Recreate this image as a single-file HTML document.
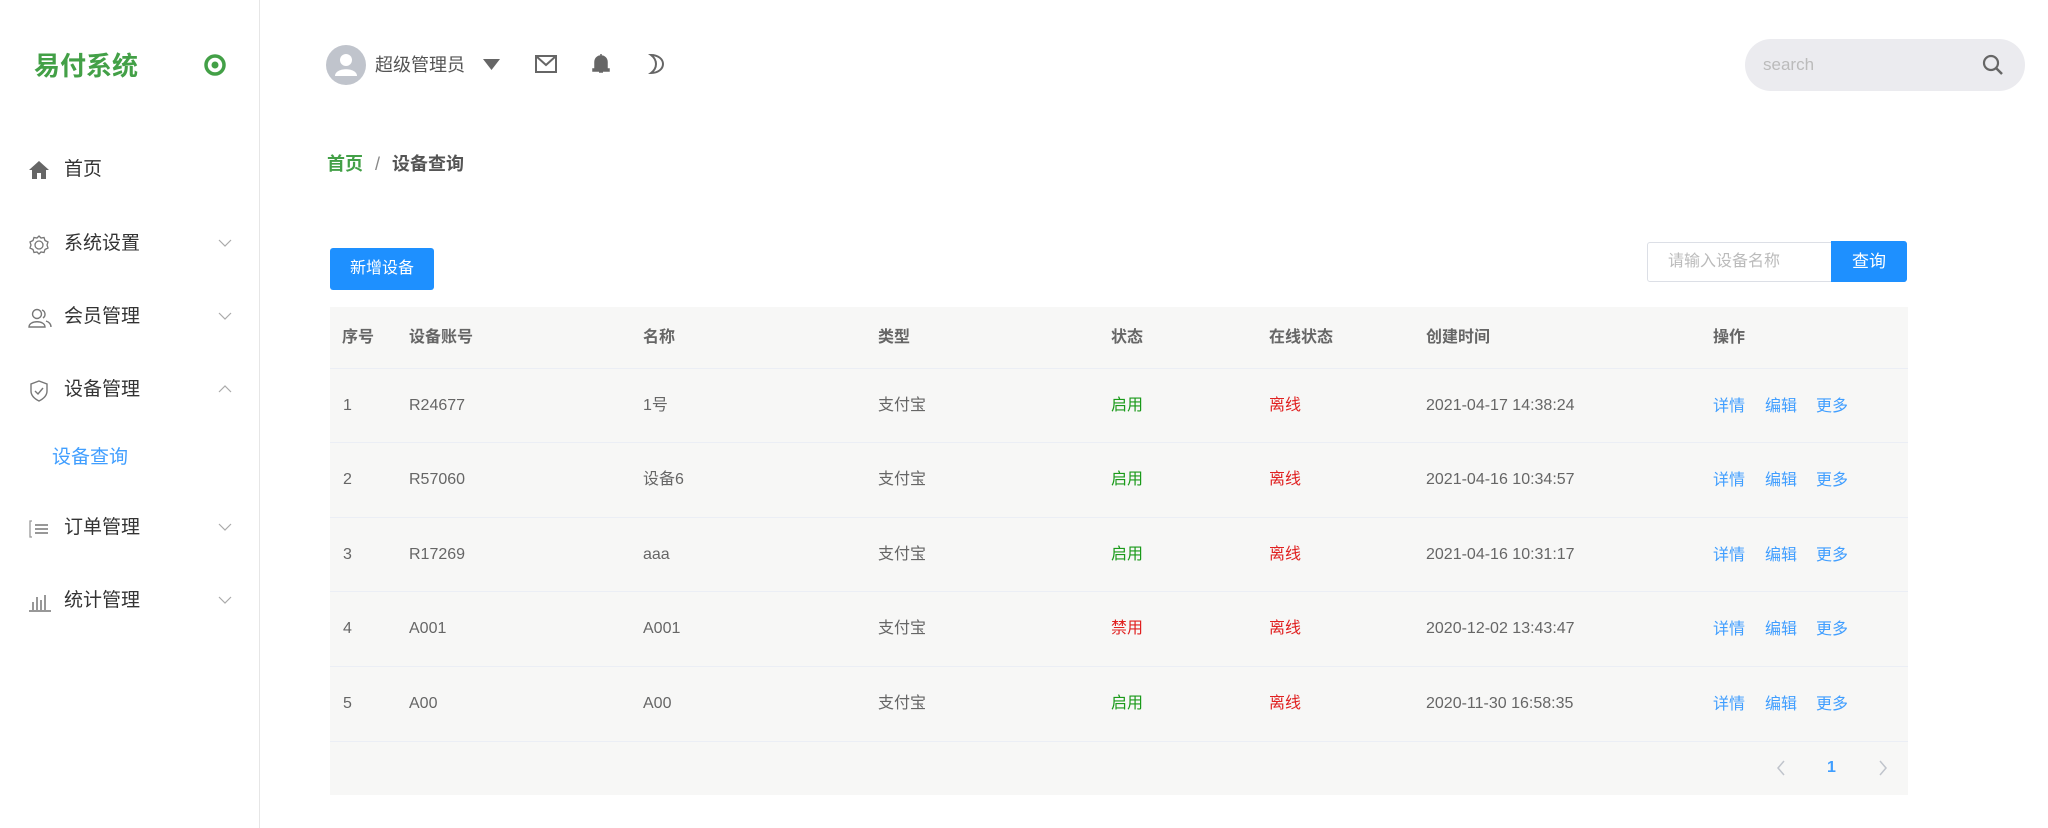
<!DOCTYPE html>
<html><head><meta charset="utf-8"><style>
*{margin:0;padding:0;box-sizing:border-box}
body{width:2048px;height:828px;overflow:hidden;background:#fff;font-family:"Liberation Sans","Noto Sans CJK SC",sans-serif;color:#333;position:relative}
.abs{position:absolute}
.side{left:0;top:0;width:260px;height:828px;border-right:1px solid #e6e6e6}
.logo{left:34px;top:51px;font-size:26px;font-weight:bold;color:#43a047;line-height:30px}
.mi{left:0;width:259px;height:40px;line-height:40px;font-size:19px;color:#333}
.mi .t{position:absolute;left:64px}
.mi svg.ic{position:absolute;left:28px;top:10px}
.mi .ch{position:absolute;left:218px;top:14px}
.th,.td{position:absolute;font-size:16px;line-height:20px}
.th{color:#666;font-weight:bold}
.td{color:#666}
.line{position:absolute;left:330px;width:1578px;height:1px;background:#ebeef5}
</style></head><body>
<div class="abs side"></div>
<div class="abs logo">易付系统</div>
<svg class="abs" style="left:203px;top:53px" width="24" height="24"><circle cx="12" cy="12" r="9" fill="none" stroke="#43a047" stroke-width="3.5"/><circle cx="12" cy="12" r="3.5" fill="#43a047"/></svg>

<div class="abs mi" style="top:150px"><svg class="ic" width="22" height="20" viewBox="0 0 22 20"><path d="M11 1 L1 10 H4 V19 H9 V13 H13 V19 H18 V10 H21 Z" fill="#666"/></svg><span class="t">首页</span></div>
<div class="abs mi" style="top:224px"><svg class="ic" width="22" height="22" viewBox="0 0 22 22"><path d="M11 2 L13 4 L16 3.5 L17 6.5 L20 8 L19 11 L20 14 L17 15.5 L16 18.5 L13 18 L11 20 L9 18 L6 18.5 L5 15.5 L2 14 L3 11 L2 8 L5 6.5 L6 3.5 L9 4 Z" fill="none" stroke="#777" stroke-width="1.3"/><circle cx="11" cy="11" r="4" fill="none" stroke="#777" stroke-width="1.3"/></svg><span class="t">系统设置</span><svg class="ch" width="14" height="10"><path d="M1 2 L7 8 L13 2" fill="none" stroke="#aaa" stroke-width="1.2"/></svg></div>
<div class="abs mi" style="top:297px"><svg class="ic" width="24" height="22" viewBox="0 0 24 22"><circle cx="9" cy="7" r="4.5" fill="none" stroke="#777" stroke-width="1.4"/><path d="M1 20 C1 13 17 13 17 20 Z" fill="none" stroke="#777" stroke-width="1.4"/><path d="M14 3 A4.5 4.5 0 0 1 15 11 M18 14 C21 15 23 17 23 20" fill="none" stroke="#777" stroke-width="1.4"/></svg><span class="t">会员管理</span><svg class="ch" width="14" height="10"><path d="M1 2 L7 8 L13 2" fill="none" stroke="#aaa" stroke-width="1.2"/></svg></div>
<div class="abs mi" style="top:370px"><svg class="ic" width="22" height="22" viewBox="0 0 22 22"><path d="M11 1 L19 4 V11 C19 16 15 19 11 21 C7 19 3 16 3 11 V4 Z" fill="none" stroke="#777" stroke-width="1.4"/><path d="M7 11 L10 14 L15 8" fill="none" stroke="#777" stroke-width="1.4"/></svg><span class="t">设备管理</span><svg class="ch" width="14" height="10"><path d="M1 8 L7 2 L13 8" fill="none" stroke="#aaa" stroke-width="1.2"/></svg></div>
<div class="abs mi" style="top:438px;color:#409eff"><span class="t" style="left:52px">设备查询</span></div>
<div class="abs mi" style="top:508px"><svg class="ic" width="22" height="22" viewBox="0 0 22 22"><path d="M4 3 H2 V19 H4" fill="none" stroke="#999" stroke-width="1.3"/><path d="M7 7 H20 M7 11 H20 M7 15 H20" stroke="#777" stroke-width="1.6"/></svg><span class="t">订单管理</span><svg class="ch" width="14" height="10"><path d="M1 2 L7 8 L13 2" fill="none" stroke="#aaa" stroke-width="1.2"/></svg></div>
<div class="abs mi" style="top:581px"><svg class="ic" width="24" height="22" viewBox="0 0 24 22"><path d="M1 20 H23 M5 19 V11 M9 19 V6 M13 19 V9 M17 19 V4" stroke="#777" stroke-width="1.5"/></svg><span class="t">统计管理</span><svg class="ch" width="14" height="10"><path d="M1 2 L7 8 L13 2" fill="none" stroke="#aaa" stroke-width="1.2"/></svg></div>

<!-- header -->
<svg class="abs" style="left:326px;top:45px" width="40" height="40" viewBox="0 0 40 40"><circle cx="20" cy="20" r="20" fill="#c0c4cc"/><circle cx="20" cy="15" r="6" fill="#fff"/><path d="M9 31 C9 22 31 22 31 31 Z" fill="#fff"/></svg>
<div class="abs" style="left:375px;top:54px;font-size:18px;line-height:22px;color:#555">超级管理员</div>
<svg class="abs" style="left:483px;top:59px" width="17" height="12"><path d="M0 0 H17 L8.5 11 Z" fill="#666"/></svg>
<svg class="abs" style="left:535px;top:55px" width="22" height="18" viewBox="0 0 22 18"><rect x="1" y="1" width="20" height="16" fill="none" stroke="#666" stroke-width="2"/><path d="M1 1 L11 10 L21 1" fill="none" stroke="#666" stroke-width="2"/></svg>
<svg class="abs" style="left:591px;top:53px" width="20" height="22" viewBox="0 0 20 22"><path d="M10 1 V3 M4 16 V9 C4 5 7 3 10 3 C13 3 16 5 16 9 V16 H18 V18 H2 V16 Z M8 19 H12" fill="#666" stroke="#666" stroke-width="1.5"/></svg>
<svg class="abs" style="left:648px;top:53px" width="18" height="22" viewBox="0 0 18 22"><path d="M3 2 C10 2 15 6 15 11 C15 16 10 20 3 20 C7 17 8 14 8 11 C8 8 7 5 3 2 Z" fill="none" stroke="#666" stroke-width="2"/></svg>
<div class="abs" style="left:1745px;top:39px;width:280px;height:52px;border-radius:26px;background:#ebebef"></div>
<div class="abs" style="left:1763px;top:54px;font-size:17px;color:#bbb;line-height:22px">search</div>
<svg class="abs" style="left:1982px;top:54px" width="22" height="22" viewBox="0 0 22 22"><circle cx="9" cy="9" r="7" fill="none" stroke="#666" stroke-width="2.2"/><path d="M14 14 L20 20" stroke="#666" stroke-width="2.5"/></svg>

<div class="abs" style="left:327px;top:153px;font-size:18px;font-weight:bold;line-height:22px"><span style="color:#43a047">首页</span><span style="color:#888;margin:0 12px;font-weight:normal">/</span><span style="color:#555">设备查询</span></div>

<div class="abs" style="left:330px;top:248px;width:104px;height:42px;background:#1e90ff;border-radius:3px;color:#fff;font-size:16px;line-height:42px;text-align:center">新增设备</div>
<div class="abs" style="left:1647px;top:242px;width:186px;height:40px;border:1px solid #dcdfe6;border-radius:3px 0 0 3px;font-size:16px;color:#bbb;line-height:38px;padding-left:20px">请输入设备名称</div>
<div class="abs" style="left:1831px;top:241px;width:76px;height:41px;background:#1e90ff;border-radius:0 3px 3px 0;color:#fff;font-size:17px;line-height:41px;text-align:center">查询</div>

<div class="abs" style="left:330px;top:307px;width:1578px;height:488px;background:#f7f7f6"></div>
<div class="line" style="top:368px"></div><div class="line" style="top:442px"></div><div class="line" style="top:517px"></div><div class="line" style="top:591px"></div><div class="line" style="top:666px"></div><div class="line" style="top:741px"></div>

<div class="th" style="left:342px;top:328px">序号</div>
<div class="th" style="left:409px;top:328px">设备账号</div>
<div class="th" style="left:643px;top:328px">名称</div>
<div class="th" style="left:878px;top:328px">类型</div>
<div class="th" style="left:1111px;top:328px">状态</div>
<div class="th" style="left:1269px;top:328px">在线状态</div>
<div class="th" style="left:1426px;top:328px">创建时间</div>
<div class="th" style="left:1713px;top:328px">操作</div>

<div class="td" style="left:343px;top:396px">1</div><div class="td" style="left:409px;top:396px">R24677</div><div class="td" style="left:643px;top:396px">1号</div><div class="td" style="left:878px;top:396px">支付宝</div><div class="td" style="left:1111px;top:396px;color:#1a9a1a">启用</div><div class="td" style="left:1269px;top:396px;color:#e02020">离线</div><div class="td" style="left:1426px;top:396px">2021-04-17 14:38:24</div>
<div class="td" style="left:343px;top:470px">2</div><div class="td" style="left:409px;top:470px">R57060</div><div class="td" style="left:643px;top:470px">设备6</div><div class="td" style="left:878px;top:470px">支付宝</div><div class="td" style="left:1111px;top:470px;color:#1a9a1a">启用</div><div class="td" style="left:1269px;top:470px;color:#e02020">离线</div><div class="td" style="left:1426px;top:470px">2021-04-16 10:34:57</div>
<div class="td" style="left:343px;top:545px">3</div><div class="td" style="left:409px;top:545px">R17269</div><div class="td" style="left:643px;top:545px">aaa</div><div class="td" style="left:878px;top:545px">支付宝</div><div class="td" style="left:1111px;top:545px;color:#1a9a1a">启用</div><div class="td" style="left:1269px;top:545px;color:#e02020">离线</div><div class="td" style="left:1426px;top:545px">2021-04-16 10:31:17</div>
<div class="td" style="left:343px;top:619px">4</div><div class="td" style="left:409px;top:619px">A001</div><div class="td" style="left:643px;top:619px">A001</div><div class="td" style="left:878px;top:619px">支付宝</div><div class="td" style="left:1111px;top:619px;color:#e02020">禁用</div><div class="td" style="left:1269px;top:619px;color:#e02020">离线</div><div class="td" style="left:1426px;top:619px">2020-12-02 13:43:47</div>
<div class="td" style="left:343px;top:694px">5</div><div class="td" style="left:409px;top:694px">A00</div><div class="td" style="left:643px;top:694px">A00</div><div class="td" style="left:878px;top:694px">支付宝</div><div class="td" style="left:1111px;top:694px;color:#1a9a1a">启用</div><div class="td" style="left:1269px;top:694px;color:#e02020">离线</div><div class="td" style="left:1426px;top:694px">2020-11-30 16:58:35</div>

<div class="td" style="left:1713px;top:397px;color:#409eff;font-size:16px;word-spacing:0">详情<span style="margin-left:20px">编辑</span><span style="margin-left:19px">更多</span></div>
<div class="td" style="left:1713px;top:471px;color:#409eff;font-size:16px">详情<span style="margin-left:20px">编辑</span><span style="margin-left:19px">更多</span></div>
<div class="td" style="left:1713px;top:546px;color:#409eff;font-size:16px">详情<span style="margin-left:20px">编辑</span><span style="margin-left:19px">更多</span></div>
<div class="td" style="left:1713px;top:620px;color:#409eff;font-size:16px">详情<span style="margin-left:20px">编辑</span><span style="margin-left:19px">更多</span></div>
<div class="td" style="left:1713px;top:695px;color:#409eff;font-size:16px">详情<span style="margin-left:20px">编辑</span><span style="margin-left:19px">更多</span></div>

<svg class="abs" style="left:1776px;top:760px" width="10" height="16"><path d="M8 1 L2 8 L8 15" fill="none" stroke="#c0c4cc" stroke-width="1.5"/></svg>
<div class="td" style="left:1827px;top:758px;color:#409eff;font-weight:bold">1</div>
<svg class="abs" style="left:1878px;top:760px" width="10" height="16"><path d="M2 1 L8 8 L2 15" fill="none" stroke="#c0c4cc" stroke-width="1.5"/></svg>
</body></html>
